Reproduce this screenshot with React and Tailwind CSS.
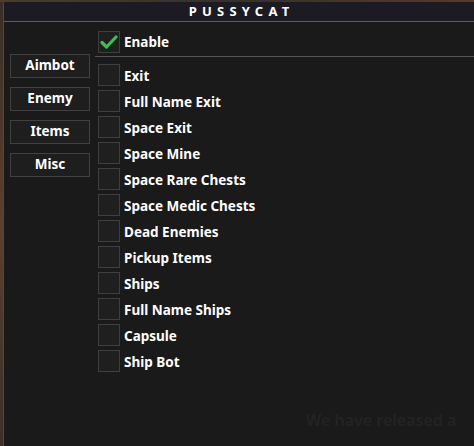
import React from "react";

const items = [
  "Exit",
  "Full Name Exit",
  "Space Exit",
  "Space Mine",
  "Space Rare Chests",
  "Space Medic Chests",
  "Dead Enemies",
  "Pickup Items",
  "Ships",
  "Full Name Ships",
  "Capsule",
  "Ship Bot",
];

const tabs = ["Aimbot", "Enemy", "Items", "Misc"];

function Check() {
  return (
    <svg width="18" height="16" viewBox="0 0 18 16" className="block">
      <path d="M2 8.5 L6.5 13 L16 3" fill="none" stroke="#3fbf4f" strokeWidth="3.2" strokeLinecap="round" strokeLinejoin="round" />
    </svg>
  );
}

function Box({ checked }) {
  return (
    <div className="w-[22px] h-[22px] border border-[#3f3f3f] bg-[#1f1f1f] flex items-center justify-center shrink-0">
      {checked && <Check />}
    </div>
  );
}

export default function App() {
  return (
    <div
      className="w-[474px] h-[446px] relative overflow-hidden flex flex-col bg-[#2e2620] text-white"
      style={{ fontFamily: '"Noto Sans", "DejaVu Sans", sans-serif' }}
    >
      <div className="h-[2px] bg-gradient-to-r from-[#4a3c30] via-[#35302c] to-[#5a3a2a] shrink-0" />
      <div className="flex flex-1">
        <div className="w-[3px] bg-gradient-to-b from-[#3a2e24] via-[#5a4030] to-[#3a3026] shrink-0" />
        <div className="flex-1 flex flex-col border-l border-[#4a4a4a] bg-[#1a1a1a]">
          <div className="h-[20px] bg-[#1c1a22] border-b border-[#5c5c5c] flex items-center justify-center">
            <span className="text-[13px] font-bold tracking-[0.4em] pl-[0.4em] leading-none">PUSSYCAT</span>
          </div>
          <div className="flex flex-1">
            <div className="w-[91px] shrink-0 pt-[32px] pl-[6px] flex flex-col gap-[9px]">
              {tabs.map((t) => (
                <div
                  key={t}
                  className="w-[80px] h-[24px] border border-[#414141] bg-[#1e1e1e] flex items-center justify-center text-[13.5px] font-bold leading-none"
                >
                  {t}
                </div>
              ))}
            </div>
            <div className="flex-1 pt-[9px]">
              <div className="flex items-center gap-[4px] pl-[3px]">
                <Box checked />
                <span className="text-[13.5px] font-bold leading-none pt-[2px]">Enable</span>
              </div>
              <div className="h-px bg-[#545454] mt-[3px]" />
              <div className="flex flex-col gap-[4px] pl-[3px] mt-[7px]">
                {items.map((it) => (
                  <div key={it} className="flex items-center gap-[4px] h-[22px]">
                    <Box />
                    <span className="text-[13.5px] font-bold leading-none pt-[4px]">{it}</span>
                  </div>
                ))}
              </div>
            </div>
          </div>
        </div>
      </div>
      <div className="absolute left-[306px] top-[412px] text-[16px] font-semibold text-[#232323] whitespace-nowrap leading-none">
        We have released a
      </div>
    </div>
  );
}
